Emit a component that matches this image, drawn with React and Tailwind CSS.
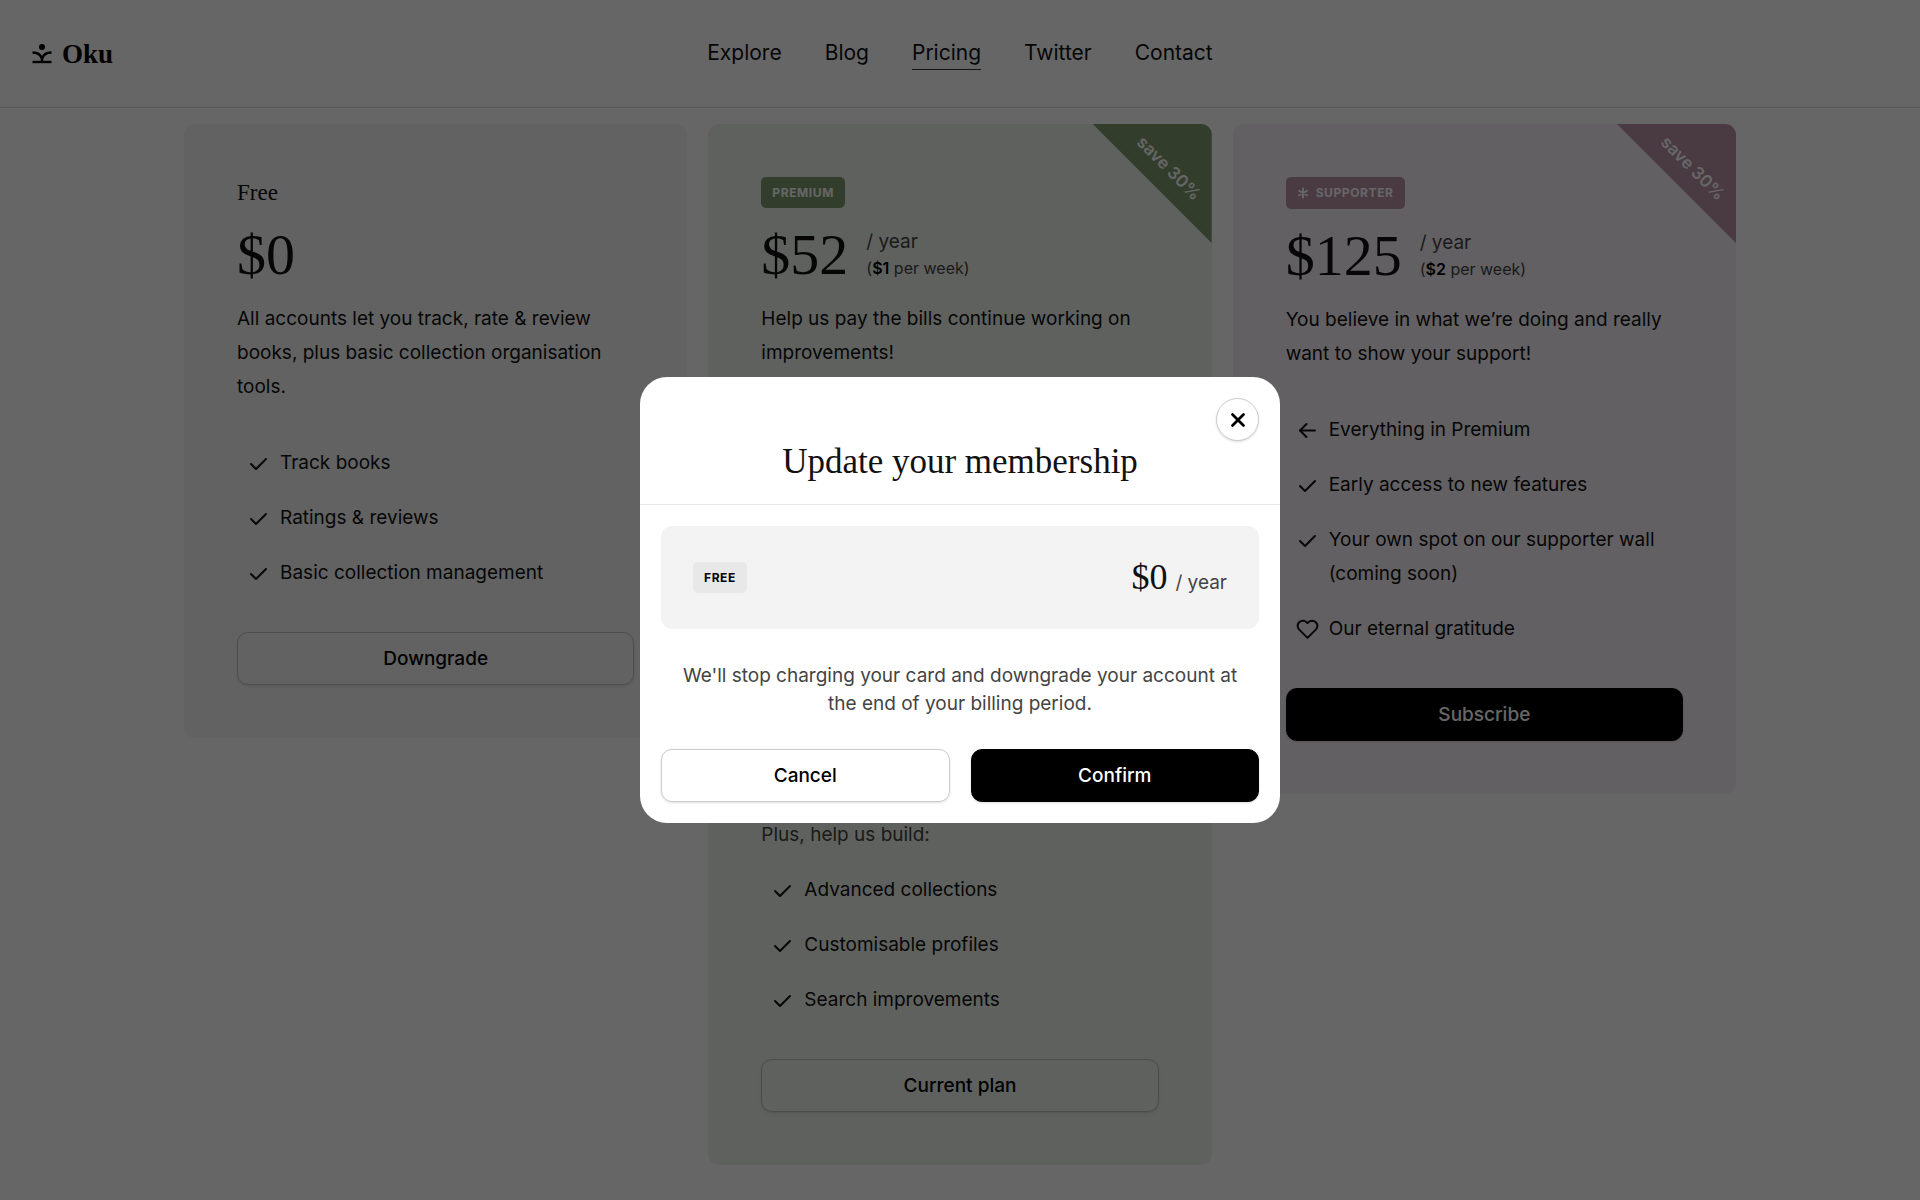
import { useState } from "react";

const SERIF = "font-['Liberation_Serif','Times_New_Roman',serif]";

const NAV = ["Explore", "Blog", "Pricing", "Twitter", "Contact"];

const Icon = ({ children, size = 24, width = 2 }) => (
    <svg
        width={size}
        height={size}
        viewBox="0 0 24 24"
        fill="none"
        stroke="currentColor"
        strokeWidth={width}
        strokeLinecap="round"
        strokeLinejoin="round"
        aria-hidden="true"
    >
        {children}
    </svg>
);

const icons = {
    check: <path d="M4 13l5 5L19 8" />,
    arrow: (
        <>
            <path d="M19 12.5H4" />
            <path d="M10.5 6L4 12.5l6.5 6.5" />
        </>
    ),
    heart: (
        <path d="M19.8 5.2a5.2 5.2 0 0 0-7.4 0l-.9.9-.9-.9a5.2 5.2 0 0 0-7.400 7.400l8.300 8.300 8.300-8.300a5.200 5.200 0 0 0 0-7.400z" />
    ),
};

const Logo = () => (
    <a href="#" className="flex items-center gap-2.5 text-black">
        <svg width="20" height="24" viewBox="0 0 20 24" fill="none" stroke="currentColor" strokeWidth="2.4" aria-hidden="true">
            <circle cx="10" cy="5" r="3" fill="currentColor" stroke="none" />
            <path d="M.5 10.5c5 0 8.500 2.500 9.500 6.500 1-4 4.500-6.500 9.500-6.500" />
            <path d="M10 15v5" />
            <path d="M.5 20h19" />
        </svg>
        <span className={`${SERIF} text-[27px] leading-8 font-bold`}>Oku</span>
    </a>
);

const Badge = ({ className, children }) => (
    <span className={`inline-flex items-center rounded-[5px] px-[11px] text-[12px] leading-4 font-bold tracking-wider uppercase ${className}`}>
        {children}
    </span>
);

const Button = ({ primary, onClick, children }) => (
    <button
        type="button"
        onClick={onClick}
        className={`h-[53px] w-full rounded-[11px] border text-[19px] leading-7 font-medium shadow-sm ${primary ? "border-black bg-black text-white" : "border-black/20 text-black"}`}
    >
        {children}
    </button>
);

const Ribbon = ({ className }) => (
    <div className={`absolute top-0 right-0 size-[119px] [clip-path:polygon(0_0,100%_0,100%_100%)] ${className}`}>
        <span className="absolute top-8 left-8 w-[88px] rotate-45 text-center text-[17px] leading-6 font-semibold whitespace-nowrap text-white">
            save 30%
        </span>
    </div>
);

const Price = ({ amount, weekly }) => (
    <div className="my-4 flex items-center gap-[18px]">
        <span className={`${SERIF} text-[58px] leading-[62px] text-[#111]`}>{amount}</span>
        {weekly && (
            <div className="text-[#444]">
                <div className="text-[19px] leading-[26px]">/ year</div>
                <div className="text-[16px] leading-[26px]">
                    (<span className="font-semibold text-black">{weekly}</span> per week)
                </div>
            </div>
        )}
    </div>
);

const Features = ({ items }) => (
    <ul className="space-y-[21px]">
        {items.map(([icon, label]) => (
            <li key={label} className="flex gap-[9px] pl-2.5">
                <span className="flex h-[34px] w-6 shrink-0 items-center justify-center">
                    <Icon>{icons[icon]}</Icon>
                </span>
                <span>{label}</span>
            </li>
        ))}
    </ul>
);

const Card = ({ className, children }) => (
    <section className={`relative overflow-hidden rounded-[11px] p-[53px] ${className}`}>{children}</section>
);

const Modal = ({ onClose }) => (
    <div className="fixed inset-0 flex items-center justify-center bg-black/60">
        <div role="dialog" aria-modal="true" aria-labelledby="modal-title" className="relative w-full max-w-[640px] rounded-[27px] bg-white">
            <button
                type="button"
                aria-label="Close"
                onClick={onClose}
                className="absolute top-[21px] right-[21px] flex size-[43px] items-center justify-center rounded-full border border-black/20 text-black shadow-sm"
            >
                <Icon size={22} width={3}>
                    <path d="M6 6l12 12M18 6L6 18" />
                </Icon>
            </button>
            <div className="border-b border-[#e8e8e8] pt-16 pb-[21px]">
                <h2 id="modal-title" className={`${SERIF} text-center text-[35px] leading-[42px] text-[#111]`}>
                    Update your membership
                </h2>
            </div>
            <div className="p-[21px]">
                <div className="flex h-[103px] items-center justify-between rounded-[11px] bg-[#f3f3f3] px-8">
                    <Badge className="h-[31px] bg-[#e8e8e8] text-black">Free</Badge>
                    <div className="flex items-baseline gap-2">
                        <span className={`${SERIF} text-[36px] leading-10 text-[#111]`}>$0</span>
                        <span className="text-[19px] text-[#444]">/ year</span>
                    </div>
                </div>
                <p className="px-5 pt-[33px] pb-[31px] text-center text-[19px] leading-7 text-[#444]">
                    We'll stop charging your card and downgrade your account at the end of your billing period.
                </p>
                <div className="grid grid-cols-2 gap-[21px]">
                    <Button onClick={onClose}>Cancel</Button>
                    <Button primary onClick={onClose}>Confirm</Button>
                </div>
            </div>
        </div>
    </div>
);

export default function App() {
    const [open, setOpen] = useState(true);

    return (
        <div className="min-h-screen bg-white font-['Inter',sans-serif] text-[#111]">
            <header className="grid h-[108px] grid-cols-[1fr_auto_1fr] items-center border-b border-[#dedede] px-8">
                <Logo />
                <nav className="flex gap-[43px] text-[21px] leading-8">
                    {NAV.map((item) => (
                        <a key={item} href="#" className={item === "Pricing" ? "border-b border-[#333]" : "border-b border-transparent"}>
                            {item}
                        </a>
                    ))}
                </nav>
            </header>

            <main className="mx-auto grid max-w-[1552px] grid-cols-3 items-start gap-[21px] pt-4 pb-8 text-[19px] leading-[34px]">
                <Card className="bg-[#f5f5f5]">
                    <h3 className={`${SERIF} text-[23px] leading-[31px]`}>Free</h3>
                    <Price amount="$0" />
                    <p className="mb-[42px]">All accounts let you track, rate & review books, plus basic collection organisation tools.</p>
                    <Features items={[["check", "Track books"], ["check", "Ratings & reviews"], ["check", "Basic collection management"]]} />
                    <div className="mt-[42px]">
                        <Button onClick={() => setOpen(true)}>Downgrade</Button>
                    </div>
                </Card>

                <Card className="bg-[#eef2ec]">
                    <Ribbon className="bg-[#7d9b6c]" />
                    <div className="flex">
                        <Badge className="h-[31px] bg-[#7d9b6c] text-white">Premium</Badge>
                    </div>
                    <Price amount="$52" weekly="$1" />
                    <p>Help us pay the bills continue working on improvements!</p>
                    <div className="h-[448px]" />
                    <p className="mb-[21px] text-[#444]">Plus, help us build:</p>
                    <Features items={[["check", "Advanced collections"], ["check", "Customisable profiles"], ["check", "Search improvements"]]} />
                    <div className="mt-[42px]">
                        <Button>Current plan</Button>
                    </div>
                </Card>

                <Card className="bg-[#f5f0f4]">
                    <Ribbon className="bg-[#b991a5]" />
                    <div className="flex">
                        <Badge className="h-8 gap-[7px] bg-[#b991a5] text-white">
                            <Icon size={12} width={4}>
                                <path d="M12 3v18M4 7.5l16 9M20 7.5l-16 9" />
                            </Icon>
                            Supporter
                        </Badge>
                    </div>
                    <Price amount="$125" weekly="$2" />
                    <p className="mb-[42px]">You believe in what we’re doing and really want to show your support!</p>
                    <Features
                        items={[
                            ["arrow", "Everything in Premium"],
                            ["check", "Early access to new features"],
                            ["check", "Your own spot on our supporter wall (coming soon)"],
                            ["heart", "Our eternal gratitude"],
                        ]}
                    />
                    <div className="mt-[42px]">
                        <Button primary>Subscribe</Button>
                    </div>
                </Card>
            </main>

            {open && <Modal onClose={() => setOpen(false)} />}
        </div>
    );
}
